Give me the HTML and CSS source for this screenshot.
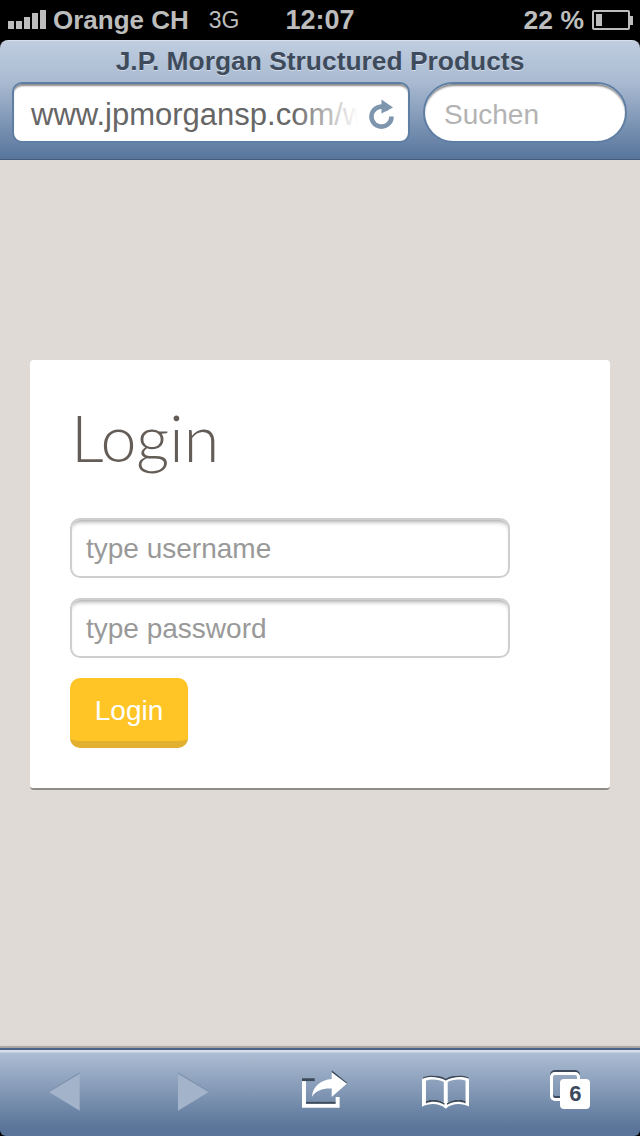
FILE: index.html
```html
<!DOCTYPE html>
<html lang="en">
  <head>
    <meta charset="UTF-8" />
    <meta name="viewport" content="width=device-width, initial-scale=1.0" />
    <title>Login</title>
    <link rel="stylesheet" href="styles.css">
  </head>
  <body>
    <div class="phone">
      <!-- status bar -->
      <div class="status">
        <div class="status-left">
          <div class="signal"><i class="s1"></i><i class="s2"></i><i class="s3"></i><i class="s4"></i><i class="s5"></i></div>
          <span class="carrier">Orange CH</span>
          <span class="net">3G</span>
        </div>
        <span class="clock">12:07</span>
        <div class="status-right">
          <span class="percent">22 %</span>
          <div class="battery"><div class="battery-level"></div></div>
          <div class="battery-tip"></div>
        </div>
      </div>

      <!-- safari top bar -->
      <div class="topbar">
        <div class="page-title">J.P. Morgan Structured Products</div>
        <div class="fields">
          <div class="url-field">
            <span class="url-text">www.jpmorgansp.com/w</span>
            <div class="url-fade"></div>
            <svg class="reload" width="28" height="30" viewBox="0 0 28 30">
              <path d="M21.5 10.5A10 10 0 1 0 24.5 17.5" fill="none" stroke="#7d95ad" stroke-width="4.6" />
              <path d="M14.5 0.5L26 8.5L14.5 14.5Z" fill="#7d95ad" />
            </svg>
          </div>
          <div class="search-field">Suchen</div>
        </div>
      </div>

      <!-- page content -->
      <div class="content">
        <form class="card">
          <h1 class="card-title">Login</h1>
          <input class="text-input" type="text" placeholder="type username" />
          <input class="text-input" type="text" placeholder="type password" />
          <button class="btn-login" type="button">Login</button>
        </form>
      </div>

      <!-- safari bottom bar -->
      <div class="toolbar">
        <svg class="tool-back" width="32" height="40" viewBox="0 0 32 40">
          <path d="M32 1L1 20L32 39Z" fill="#a2b3ca" />
          <path d="M32 0L0 19.5L1 20L32 1.5Z" fill="#7f92ad" />
        </svg>
        <svg class="tool-forward" width="32" height="40" viewBox="0 0 32 40">
          <path d="M0 1L31 20L0 39Z" fill="#a2b3ca" />
          <path d="M0 0L32 19.5L31 20L0 1.5Z" fill="#7f92ad" />
        </svg>
        <svg class="tool-share" width="48" height="40" viewBox="0 0 48 40">
          <path d="M0 8H13V11H4V32H34V27H38V38H0Z" fill="#fff" />
          <path d="M0 8H13V11H0Z" fill="#3c4a5c" />
          <path d="M4 32H34V34H4Z" fill="#3c4a5c" />
          <path d="M30 1L46 13L30 27V18.500C22 18 14 20 10 27C11 16 19 10 30 9Z" fill="#fff" />
          <path d="M30 0L46 13L45 13.500L30 2Z" fill="#3c4a5c" />
        </svg>
        <svg class="tool-book" width="48" height="36" viewBox="0 0 48 36">
          <path fill-rule="evenodd" fill="#fff" d="M24 5C19 1 7 0 1 3L0 6V33C7 29 18 29 24 35C30 29 41 29 48 33V6L47 3C41 0 29 1 24 5ZM22 8C18 5 9 4.500 4 6.500V27C10 25 18 25.500 22 28.500ZM26 8C30 5 39 4.500 44 6.500V27C38 25 30 25.500 26 28.500Z" />
          <path d="M1 3C7 0 19 1 24 4.500C29 1 41 0 47 3L47.500 4.500C41 1.500 30 2.500 24 6.500C18 2.500 7 1.500 0.500 4.500Z" fill="#3c4a5c" />
          <path d="M4 27C10 25 18 25.500 23 29.500L22.500 31C17 27.500 10 27 4 29.500Z" fill="#3c4a5c" />
          <path d="M25 29.500C30 25.500 38 25 44 27V29.500C38 27 31 27.500 25.500 31Z" fill="#3c4a5c" />
        </svg>
        <div class="tabs">
          <div class="tabs-back"></div>
          <div class="tabs-count">6</div>
        </div>
      </div>
    </div>
  </body>
</html>
```

FILE: styles.css
```css
* {
  box-sizing: border-box;
}

body {
  margin: 0;
  background: #000;
  font-family: "Liberation Sans", Arial, sans-serif;
}

.phone {
  display: flex;
  flex-direction: column;
  width: 640px;
  height: 1136px;
  overflow: hidden;
}

/* status bar */
.status {
  display: flex;
  justify-content: space-between;
  align-items: center;
  height: 40px;
  padding: 0 7px 0 8px;
  background: #000;
  color: #bdbdbd;
  font-weight: bold;
}

.status-left {
  display: flex;
  align-items: center;
  width: 277px;
}

.signal {
  display: flex;
  align-items: flex-end;
  gap: 2px;
  height: 20px;
  margin: 0 7px 2px 0;
}

.signal i {
  display: block;
  width: 6px;
  background: #bdbdbd;
}

.s1 { height: 8px; }
.s2 { height: 8px; }
.s3 { height: 12px; }
.s4 { height: 16px; }
.s5 { height: 19px; }

.carrier {
  font-size: 26px;
}

.net {
  margin-left: 20px;
  font-size: 23px;
  font-weight: normal;
}

.clock {
  width: 100px;
  font-size: 27px;
}

.status-right {
  display: flex;
  justify-content: flex-end;
  align-items: center;
  width: 247px;
}

.percent {
  margin-right: 8px;
  font-size: 26.500px;
}

.battery {
  width: 38px;
  height: 20px;
  padding: 2px;
  border: 2px solid #bdbdbd;
  border-radius: 2px;
}

.battery-level {
  width: 6px;
  height: 12px;
  background: #bdbdbd;
}

.battery-tip {
  width: 3px;
  height: 9px;
  background: #bdbdbd;
}

/* top bar */
.topbar {
  height: 120px;
  padding-top: 6px;
  border-top: 1px solid #d5deea;
  border-bottom: 1px solid #425d80;
  border-radius: 8px 8px 0 0;
  background: linear-gradient(#bfcddf, #a9bad1 35%, #5d7aa0 95%, #587499);
}

.page-title {
  height: 35px;
  color: #3e4b5c;
  font-size: 26.400px;
  font-weight: bold;
  line-height: 28px;
  text-align: center;
  text-shadow: 0 1px 0 rgba(255, 255, 255, 0.45);
}

.fields {
  display: flex;
  gap: 13px;
  padding-left: 12px;
}

.url-field {
  position: relative;
  display: flex;
  align-items: center;
  width: 398px;
  height: 61px;
  overflow: hidden;
  padding: 5px 0 0 17px;
  border: 2px solid #5f7ea3;
  border-radius: 10px;
  background: #fff;
  box-shadow: inset 0 3px 2px -1px #888;
  color: #666;
  font-size: 31px;
  white-space: nowrap;
}

.url-fade {
  position: absolute;
  top: 4px;
  right: 42px;
  width: 74px;
  height: 52px;
  background: linear-gradient(to right, rgba(255, 255, 255, 0), #fff 90%);
}

.reload {
  position: absolute;
  top: 15px;
  right: 13px;
}

.search-field {
  display: flex;
  align-items: center;
  width: 204px;
  height: 61px;
  padding: 5px 0 0 19px;
  border: 2px solid #5f7ea3;
  border-radius: 31px;
  background: #fff;
  box-shadow: inset 0 3px 2px -1px #888;
  color: #b3b3b3;
  font-size: 28px;
}

/* page */
.content {
  flex: 1;
  padding: 200px 30px 0;
  background: #dfdad6;
}

.card {
  display: flex;
  flex-direction: column;
  align-items: flex-start;
  height: 430px;
  padding: 40px;
  border-bottom: 2px solid #8f8b86;
  border-radius: 4px;
  background: #fff;
}

.card-title {
  height: 118px;
  margin: -3px 0 3px 1px;
  color: #645d57;
  font-family: Lato, "Liberation Sans", sans-serif;
  font-size: 64.500px;
  font-weight: 300;
  line-height: 80px;
}

.text-input {
  width: 440px;
  height: 60px;
  margin-bottom: 20px;
  padding: 2px 14px 0;
  border: 2px solid #cfcfcf;
  border-radius: 10px;
  background: #fff;
  box-shadow: inset 0 5px 4px -3px #aaa;
  font-family: "Liberation Sans", Arial, sans-serif;
  font-size: 28px;
  outline: none;
}

.text-input::placeholder {
  color: #999;
  opacity: 1;
}

.btn-login {
  width: 118px;
  height: 70px;
  padding: 3px 0 0;
  border: 0;
  border-bottom: 7px solid #e3af2f;
  border-radius: 10px;
  background: #ffc526;
  color: #fff;
  font-family: "Liberation Sans", Arial, sans-serif;
  font-size: 28px;
}

/* bottom bar */
.toolbar {
  display: flex;
  align-items: center;
  height: 88px;
  padding: 0 50px 2px 48px;
  border-top: 2px solid #4a6488;
  border-radius: 0 0 6px 6px;
  box-shadow: 0 -2px 1px #a8a39e;
  background: linear-gradient(#d6deea 0, #d6deea 2px, #adbdd3 3px, #5a7599 90%);
}

.tool-forward {
  margin-left: 98px;
}

.tool-share {
  margin: 0 0 4px 93px;
}

.tool-book {
  margin-left: 72px;
}

.tabs {
  position: relative;
  width: 40px;
  height: 40px;
  margin-left: 81px;
}

.tabs-back {
  width: 30px;
  height: 29px;
  border: 3px solid #fff;
  border-radius: 5px;
  box-shadow: 0 -2px 0 #3c4a5c, inset 0 -2px 0 #3c4a5c;
}

.tabs-count {
  position: absolute;
  top: 7px;
  left: 10px;
  width: 30px;
  height: 30px;
  border-radius: 4px;
  background: #fff;
  color: #3c4a5c;
  font-size: 22px;
  font-weight: bold;
  line-height: 30px;
  text-align: center;
}
```
